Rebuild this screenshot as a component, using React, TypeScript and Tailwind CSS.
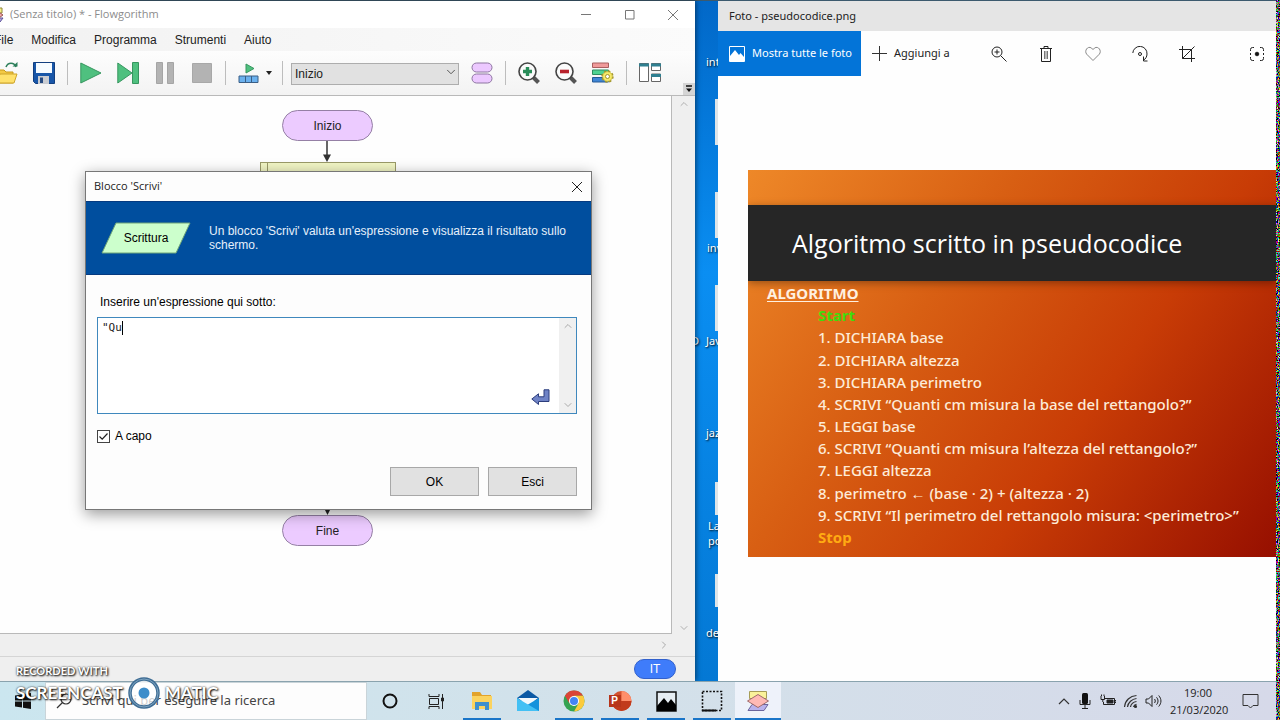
import type { ReactNode } from "react"
import { ChevronDown, ChevronRight, ChevronUp } from "lucide-react"

const menuItems = ["File", "Modifica", "Programma", "Strumenti", "Aiuto"]

const steps = [
  "1. DICHIARA base",
  "2. DICHIARA altezza",
  "3. DICHIARA perimetro",
  "4. SCRIVI “Quanti cm misura la base del rettangolo?”",
  "5. LEGGI base",
  "6. SCRIVI “Quanti cm misura l’altezza del rettangolo?”",
  "7. LEGGI altezza",
  "8. perimetro ← (base · 2) + (altezza · 2)",
  "9. SCRIVI “Il perimetro del rettangolo misura: <perimetro>”",
]

type IconButtonProps = {
  label: string
  className?: string
  children: ReactNode
}
const IconButton = ({ label, className = "", children }: IconButtonProps) => (
  <button type="button" aria-label={label} className={`flex shrink-0 items-center justify-center ${className}`}>
    {children}
  </button>
)

const Separator = () => <div className="mx-3 h-6 w-px shrink-0 bg-[#bdbdbd]" />

const CloseIcon = () => (
  <svg width="12" height="12" viewBox="0 0 12 12" stroke="currentColor" fill="none">
    <path d="M1 1l10 10M11 1L1 11" />
  </svg>
)

const Toolbar = () => (
  <div className="relative flex h-[45px] items-center border-b border-[#b9b9b9] bg-gradient-to-b from-[#fdfdfd] to-[#f3f3f3]">
    <div className="-ml-1 flex items-center gap-[15px]">
      <IconButton label="Apri">
        <svg width="22" height="22" viewBox="0 0 22 22">
          <path d="M0 8h8l2 2h7v11H0z" fill="#f3c944" stroke="#c79a1c" />
          <path d="M4 12h17l-3 9H0z" fill="#ffe16b" stroke="#cfa52a" />
          <path d="M10 5c2-5 8-5 10 0" fill="none" stroke="#2d7f5b" strokeWidth="1.6" />
          <path d="M16.5 4.5h5V0z" fill="#2d7f5b" />
        </svg>
      </IconButton>
      <IconButton label="Salva">
        <svg width="22" height="22" viewBox="0 0 22 22">
          <path d="M.5.5h21v21h-19l-2-2z" fill="#1856a8" stroke="#123f80" />
          <path d="M3 1h16v10H3z" fill="#f6fbff" />
          <path d="M5 14h11v8H5z" fill="#c9ccd2" />
          <path d="M7 15.500h3V21H7z" fill="#274a80" />
        </svg>
      </IconButton>
    </div>
    <Separator />
    <div className="flex items-center gap-[15px]">
      <IconButton label="Esegui">
        <svg width="22" height="22" viewBox="0 0 22 22">
          <path d="M.8 1v20L21 11z" fill="#4fc07f" stroke="#37965f" />
        </svg>
      </IconButton>
      <IconButton label="Passo">
        <svg width="22" height="22" viewBox="0 0 22 22">
          <path d="M.8 1v20L15 11z" fill="#4fc07f" stroke="#37965f" />
          <path d="M15.500.5h6v21h-6z" fill="#4fc07f" stroke="#37965f" />
        </svg>
      </IconButton>
      <IconButton label="Pausa">
        <svg width="22" height="22" viewBox="0 0 22 22" fill="#b3b3b3" stroke="#a5a5a5">
          <path d="M2.500.5h6v21h-6zM13.500.5h6v21h-6z" />
        </svg>
      </IconButton>
      <IconButton label="Ferma">
        <svg width="22" height="22" viewBox="0 0 22 22">
          <path d="M1.500 1.500h19v19h-19z" fill="#b3b3b3" stroke="#a8a8a8" />
        </svg>
      </IconButton>
    </div>
    <Separator />
    <div className="flex items-center gap-[6px]">
      <IconButton label="Finestre di esecuzione">
        <svg width="22" height="22" viewBox="0 0 22 22">
          <path d="M8 2v9l8-4.500z" fill="#4fc07f" stroke="#37965f" />
          <path d="M1 14h19v6.500H1z" fill="#6bb1ee" stroke="#3a5f86" />
          <path d="M7.500 14v6.500M13.500 14v6.500" stroke="#3a5f86" />
        </svg>
      </IconButton>
      <svg width="6" height="4" viewBox="0 0 6 4">
        <path d="M0 0h6L3 4z" fill="#222" />
      </svg>
    </div>
    <div className="mr-2 ml-[10px] h-6 w-px shrink-0 bg-[#bdbdbd]" />
    <label className="relative w-[168px]">
      <select
        aria-label="Funzione"
        className="h-[22px] w-full appearance-none border border-[#adadad] bg-[#e1e1e1] px-[3px] text-xs text-[#222]"
      >
        <option>Inizio</option>
      </select>
      <ChevronDown className="pointer-events-none absolute top-1 right-px size-[14px] text-[#444]" strokeWidth={1.5} />
    </label>
    <IconButton label="Funzioni" className="ml-3">
      <svg width="22" height="22" viewBox="0 0 22 22" fill="#ecc8ff" stroke="#8d76a0">
        <rect x="1" y="1" width="20" height="9" rx="4.500" />
        <rect x="1" y="12" width="20" height="9" rx="4.500" />
      </svg>
    </IconButton>
    <Separator />
    <div className="flex items-center gap-[15px]">
      <IconButton label="Ingrandisci">
        <svg width="22" height="22" viewBox="0 0 22 22">
          <path d="M14 14l6.500 6.500" stroke="#555" strokeWidth="4" />
          <circle cx="9.500" cy="9.500" r="8.500" fill="#fbfbfb" stroke="#444" strokeWidth="1.600" />
          <path d="M9.500 5v9M5 9.500h9" stroke="#2a8d5a" strokeWidth="3.400" />
        </svg>
      </IconButton>
      <IconButton label="Riduci">
        <svg width="22" height="22" viewBox="0 0 22 22">
          <path d="M14 14l6.500 6.500" stroke="#555" strokeWidth="4" />
          <circle cx="9.500" cy="9.500" r="8.500" fill="#fbfbfb" stroke="#444" strokeWidth="1.600" />
          <path d="M5 9.500h9" stroke="#b8222c" strokeWidth="3.600" />
        </svg>
      </IconButton>
      <IconButton label="Stile grafico">
        <svg width="22" height="22" viewBox="0 0 22 22">
          <path d="M.5 1h16v4.500H.5z" fill="#f09a9a" stroke="#a95f5f" />
          <path d="M.5 8h16v4.500H.5z" fill="#4fd392" stroke="#2f8d60" />
          <path d="M.5 15.500h16V20H.5z" fill="#3f86d6" stroke="#265a96" />
          <circle cx="15.500" cy="14.500" r="5" fill="#f7ea6a" stroke="#a2952a" strokeWidth="2.400" strokeDasharray="2.200 1.700" />
          <circle cx="15.500" cy="14.500" r="4.800" fill="#f7ea6a" stroke="#b5a634" strokeWidth=".6" />
          <circle cx="15.500" cy="14.500" r="2" fill="#fff" stroke="#a2952a" />
        </svg>
      </IconButton>
    </div>
    <Separator />
    <IconButton label="Disposizione finestre">
      <svg width="22" height="22" viewBox="0 0 22 22" fill="#fff" stroke="#666">
        <path d="M.5 1.500h9v18h-9zM12.500 1.500h9v7h-9zM12.500 12h9v7.500h-9z" />
        <path d="M0 3h10M12 3h10M12 13.500h10" stroke="#2f7f90" strokeWidth="3" />
      </svg>
    </IconButton>
    <div className="absolute right-0 bottom-0 flex size-3 items-center justify-center bg-[#d5d5d5]">
      <svg width="8" height="8" viewBox="0 0 8 8">
        <path d="M1 1h6" stroke="#111" strokeWidth="1.500" />
        <path d="M1 3.500h6L4 7z" fill="#111" />
      </svg>
    </div>
  </div>
)

const WriteDialog = () => (
  <section className="absolute top-[75px] left-[85px] flex w-[507px] flex-col border border-[#777] bg-[#fdfdfd] shadow-[0_4px_14px_rgba(0,0,0,0.4)]">
    <div className="flex h-[29px] items-center justify-between px-2 font-['Open_Sans',sans-serif] text-[11px] text-[#222]">
      <h2>Blocco 'Scrivi'</h2>
      <IconButton label="Chiudi">
        <CloseIcon />
      </IconButton>
    </div>
    <div className="flex h-[74px] items-center gap-[18px] border-y border-[#053a80] bg-[#004e9e] px-[15px]">
      <div className="relative shrink-0">
        <svg className="block" width="90" height="32" viewBox="0 0 90 32">
          <path d="M15 1h74L75 31H1z" fill="#ccffcc" stroke="#6fa57a" />
        </svg>
        <span className="absolute inset-0 flex items-center justify-center text-xs">Scrittura</span>
      </div>
      <p className="text-xs leading-[14px] text-[#e6f0fb]">
        Un blocco 'Scrivi' valuta un'espressione e visualizza il risultato sullo schermo.
      </p>
    </div>
    <form className="flex flex-col pt-5 pr-[14px] pb-[13px] pl-[11px]">
      <label htmlFor="espressione" className="pl-[3px] text-xs leading-[14px]">
        Inserire un'espressione qui sotto:
      </label>
      <div className="relative mt-2 flex h-[97px] border border-[#3f88bd] bg-white">
        <textarea
          id="espressione"
          className="min-w-0 flex-1 resize-none px-1 py-[3px] font-['DejaVu_Sans_Mono',monospace] text-[11px] leading-[14px] text-[#222] outline-none"
          defaultValue={'"Qu'}
        />
        <div className="flex w-[17px] flex-col items-center justify-between bg-[#f0f0f0] py-[2px] text-[#aaa]">
          <ChevronUp className="size-3" />
          <ChevronDown className="size-3" />
        </div>
        <span className="absolute top-[3px] left-[24px] h-[14px] w-px bg-black" />
        <svg className="absolute right-[26px] bottom-2" width="19" height="16" viewBox="0 0 19 16">
          <path d="M13 .8h5v11.700H7.500v3L.8 10l6.700-5.200v3H13z" fill="#6f83c6" stroke="#2c3d7c" />
        </svg>
      </div>
      <label className="mt-[15px] flex items-center gap-[5px] text-xs leading-[14px]">
        <span className="relative flex size-[13px]">
          <input type="checkbox" defaultChecked className="size-[13px] appearance-none border border-[#444] bg-white" />
          <svg className="pointer-events-none absolute inset-0" width="13" height="13" viewBox="0 0 13 13">
            <path d="M2.500 6.500L5.200 9.200 10.500 3.500" fill="none" stroke="#222" strokeWidth="1.200" />
          </svg>
        </span>
        A capo
      </label>
      <div className="mt-6 flex justify-end gap-[9px] text-xs">
        <button type="button" className="h-[29px] w-[89px] border border-[#a8a8a8] bg-[#e1e1e1]">
          OK
        </button>
        <button type="button" className="h-[29px] w-[89px] border border-[#a8a8a8] bg-[#e1e1e1]">
          Esci
        </button>
      </div>
    </form>
  </section>
)

const Terminal = ({ className, children }: { className: string; children: ReactNode }) => (
  <div
    className={`absolute left-[282px] flex h-[31px] w-[91px] items-center justify-center rounded-full border border-[#9580a5] bg-[#eccbff] text-xs text-[#222] ${className}`}
  >
    {children}
  </div>
)

const FlowgorithmWindow = () => (
  <section className="z-10 flex min-w-0 flex-col bg-[#efefef] shadow-[1px_0_5px_rgba(0,0,0,0.5)]">
    <header className="flex h-[27px] items-center bg-white">
      <svg className="-ml-3" width="16" height="16" viewBox="0 0 16 16">
        <path d="M3 1h11v5H3z" fill="#f6ee86" stroke="#8f873b" />
        <path d="M2 11h13l-3 4H0z" fill="#b0a5e4" stroke="#5d5296" />
        <path d="M8 3l7 5-7 5-7-5z" fill="#f0a6a6" stroke="#955" />
      </svg>
      <h1 className="ml-[6px] flex-1 font-['Open_Sans',sans-serif] text-[11px] text-[#8c8c8c]">
        (Senza titolo) * - Flowgorithm
      </h1>
      <div className="flex gap-8 pr-4 text-[#777]">
        <IconButton label="Riduci a icona">
          <svg width="11" height="11" viewBox="0 0 11 11" stroke="currentColor">
            <path d="M0 5.500h10" />
          </svg>
        </IconButton>
        <IconButton label="Ingrandisci finestra">
          <svg width="11" height="11" viewBox="0 0 11 11" stroke="currentColor" fill="none">
            <path d="M1.500 1.500h8.500v8.500H1.500z" />
          </svg>
        </IconButton>
        <IconButton label="Chiudi finestra">
          <CloseIcon />
        </IconButton>
      </div>
    </header>
    <nav className="flex h-[23px] items-center gap-[18px] bg-gradient-to-r from-[#f2f2f2] to-[#fbfbfb] text-xs text-[#222]">
      {menuItems.map((item) => (
        <button key={item} type="button" className="first:-ml-[6px]">
          {item}
        </button>
      ))}
    </nav>
    <Toolbar />
    <div className="relative flex flex-1">
      <div className="relative min-h-[538px] flex-1 border-r border-b border-[#b9b9b9] bg-[#fefefe]">
        <Terminal className="top-[14px]">Inizio</Terminal>
        <svg className="absolute top-[45px] left-[322px]" width="10" height="21" viewBox="0 0 10 21">
          <path d="M5 0v15" stroke="#333" strokeWidth="1.500" />
          <path d="M1 13.500h8L5 21z" fill="#333" />
        </svg>
        <div className="absolute top-[66px] left-[260px] h-[30px] w-[136px] border border-[#9a9a68] bg-[#f1f5c4] pl-[6px]">
          <div className="h-full border-l border-[#9a9a68]" />
        </div>
        <svg className="absolute top-[412px] left-[323px]" width="9" height="8" viewBox="0 0 9 8">
          <path d="M1 0h7L4.500 7z" fill="#222" />
        </svg>
        <Terminal className="top-[419px]">Fine</Terminal>
      </div>
      <div className="flex w-[23px] flex-col items-center justify-between pt-[2px] text-[#b0b0b0]">
        <ChevronUp className="size-3" />
        <ChevronDown className="size-3" />
      </div>
      <WriteDialog />
    </div>
    <div className="flex h-[23px] items-center justify-end border-b border-[#d5d5d5] pr-[25px] text-[#aaa]">
      <ChevronRight className="size-3" />
    </div>
    <footer className="flex h-6 items-center justify-end pr-[19px]">
      <button type="button" className="h-5 w-[42px] rounded-full border border-[#3160cc] bg-[#3f7cfa] text-xs text-white">
        IT
      </button>
    </footer>
  </section>
)

const iconClass = "absolute right-0 w-[3px] bg-[#dfe5e8]"
const labelClass =
  "absolute font-['Noto_Sans',sans-serif] text-[11px] leading-[15px] whitespace-nowrap text-white [text-shadow:1px_1px_2px_#000]"

const Desktop = () => (
  <div className="relative overflow-hidden bg-gradient-to-b from-[#0268c8] via-[#0a8ef2] via-40% to-[#0478d4]">
    <div className={`${iconClass} top-[98px] h-[46px]`} />
    <div className={`${iconClass} top-[191px] h-[46px]`} />
    <div className={`${iconClass} top-[284px] h-[46px]`} />
    <div className={`${iconClass} top-[481px] h-[33px]`} />
    <div className={`${iconClass} top-[573px] h-[33px]`} />
    <span className={`${labelClass} top-[53px] left-[11px]`}>int</span>
    <span className={`${labelClass} top-[239px] left-[12px]`}>inv</span>
    <span className={`${labelClass} top-[332px] left-[11px]`}>Jav</span>
    <span className={`${labelClass} top-[332px] -left-1`}>D</span>
    <span className={`${labelClass} top-[424px] left-[11px]`}>jaz</span>
    <span className={`${labelClass} top-[517px] left-[13px]`}>
      La
      <br />
      po
    </span>
    <span className={`${labelClass} top-[624px] left-[11px]`}>de</span>
  </div>
)

const Slide = () => (
  <article className="ml-[30px] flex flex-col overflow-hidden bg-[linear-gradient(125deg,#ee8828,#d85f13_34%,#c83c06_64%,#960f00)] pt-[35px] font-['Noto_Sans',sans-serif] text-[#fdebd8]">
    <h2 className="bg-[#262626] pl-11 font-['Open_Sans',sans-serif] text-[25px] leading-[76px] whitespace-nowrap text-white shadow-[0_2px_8px_rgba(0,0,0,0.35)]">
      Algoritmo scritto in pseudocodice
    </h2>
    <div className="flex h-[276px] flex-col justify-between pt-px pb-[9px] pl-[19px] text-[15px] leading-[22px] font-medium whitespace-nowrap">
      <p className="font-bold text-[#fff0e0] underline underline-offset-2">ALGORITMO</p>
      <p className="pl-[51px] font-bold text-[#3fdc0c]">Start</p>
      {steps.map((step) => (
        <p key={step} className="pl-[51px]">
          {step}
        </p>
      ))}
      <p className="pl-[51px] font-bold text-[#ffaa12]">Stop</p>
    </div>
  </article>
)

const MountainIcon = () => (
  <svg width="16" height="16" viewBox="0 0 16 16">
    <path d="M.5.5h15v15H.5z" fill="none" stroke="#fff" />
    <path d="M1 15V10l5-6 4 5 1.500-2L15 11v4z" fill="#fff" />
  </svg>
)

const PhotosWindow = () => (
  <section className="z-10 flex min-w-0 flex-col bg-[#fefefe] font-['Noto_Sans',sans-serif] text-[11px] text-[#222]">
    <header className="flex h-[30px] items-center bg-[#e5e5e5] pl-[11px]">
      <h1>Foto - pseudocodice.png</h1>
    </header>
    <div className="flex h-[45px] items-center">
      <button type="button" className="flex h-full w-[143px] items-center gap-[7px] bg-[#0374d8] pl-[11px] whitespace-nowrap text-white">
        <MountainIcon />
        Mostra tutte le foto
      </button>
      <button type="button" className="flex items-center gap-[7px] pl-[11px] whitespace-nowrap">
        <svg width="15" height="15" viewBox="0 0 15 15" stroke="#333">
          <path d="M7.500 0v15M0 7.500h15" />
        </svg>
        Aggiungi a
      </button>
      <div className="ml-auto flex items-center pr-[11px]">
        <div className="flex gap-[31px] pr-[54px]">
          <IconButton label="Zoom">
            <svg width="16" height="16" viewBox="0 0 16 16" fill="none" stroke="#222">
              <circle cx="6" cy="6" r="5" />
              <path d="M9.800 9.800l5.700 5.700M6 3.500v5M3.500 6h5" />
            </svg>
          </IconButton>
          <IconButton label="Elimina">
            <svg width="16" height="16" viewBox="0 0 16 16" fill="none" stroke="#222">
              <path d="M3.500 2.500v13h9v-13M2 2.500h12M6 2.500V.5h4v2" />
              <path d="M6.500 5v8M8 5v8M9.500 5v8" stroke="#777" />
            </svg>
          </IconButton>
          <IconButton label="Preferiti">
            <svg width="16" height="16" viewBox="0 0 16 16" fill="none" stroke="#888">
              <path d="M8 14.500L1.700 8.200C-1 5 2.500-.5 6.500 2L8 3.600 9.500 2c4-2.500 7.500 3 4.800 6.200z" />
            </svg>
          </IconButton>
          <IconButton label="Ruota">
            <svg width="16" height="16" viewBox="0 0 16 16" fill="none" stroke="#222">
              <path d="M.8 7A7 7 0 0 1 15 8c0 2.800-1.500 5-3.500 6.200M11.500 10.500v4.500H15.500" />
              <circle cx="8" cy="8" r="1.500" />
            </svg>
          </IconButton>
          <IconButton label="Ritaglia">
            <svg width="16" height="16" viewBox="0 0 16 16" fill="none" stroke="#222">
              <path d="M3.500 0v12.500H16M0 3.500h12.500V16M3.500 12.500L15.500.5" />
            </svg>
          </IconButton>
        </div>
        <IconButton label="Modifica e crea">
          <svg width="16" height="16" viewBox="0 0 16 16" fill="none" stroke="#222">
            <path d="M1.500 5V3.500a2 2 0 0 1 2-2H5M11 1.500h1.500a2 2 0 0 1 2 2V5M14.500 11v1.500a2 2 0 0 1-2 2H11M5 14.500H3.500a2 2 0 0 1-2-2V11M1.500 7v2M14.500 7v2" />
            <circle cx="8" cy="8" r="1.800" fill="#111" />
          </svg>
        </IconButton>
      </div>
    </div>
    <div className="flex-1 pt-[94px]">
      <Slide />
    </div>
  </section>
)

type TaskButtonProps = {
  label: string
  open?: boolean
  active?: boolean
  children: ReactNode
}
const TaskButton = ({ label, open, active, children }: TaskButtonProps) => (
  <button
    type="button"
    aria-label={label}
    className={`relative flex w-[46px] shrink-0 items-center justify-center ${active ? "bg-[#eef2fa]" : ""}`}
  >
    {children}
    {open && <span className={`absolute bottom-0 h-[2px] bg-[#1a75c8] ${active ? "inset-x-0" : "inset-x-1"}`} />}
  </button>
)

const Taskbar = () => (
  <footer className="z-20 flex h-[39px] border-t border-[#8aa3ae] bg-gradient-to-r from-[#cbe6ef] via-[#d3e1ea] to-[#d6d9e9] text-[#222]">
    <button type="button" aria-label="Start" className="flex w-[45px] items-center justify-center">
      <svg width="16" height="16" viewBox="0 0 16 16" fill="#111">
        <path d="M0 2.500l7-1v6H0zM8 1.300L16 0v7.500H8zM0 8.500h7v6l-7-1zM8 8.500h8V16l-8-1.300z" />
      </svg>
    </button>
    <label className="flex w-[322px] items-center gap-[10px] border border-[#c9d4d9] bg-[#fdfdfd] pl-[10px]">
      <svg width="16" height="16" viewBox="0 0 16 16" fill="none" stroke="#333" strokeWidth="1.200">
        <circle cx="10" cy="6" r="5" />
        <path d="M6.500 9.500L1 15" />
      </svg>
      <input
        type="search"
        aria-label="Cerca"
        placeholder="Scrivi qui per eseguire la ricerca"
        className="min-w-0 flex-1 bg-transparent font-['Noto_Sans',sans-serif] text-[13px] outline-none placeholder:text-[#444]"
      />
    </label>
    <TaskButton label="Cortana">
      <svg width="16" height="16" viewBox="0 0 16 16">
        <circle cx="8" cy="8" r="6.500" fill="none" stroke="#111" strokeWidth="2" />
      </svg>
    </TaskButton>
    <TaskButton label="Visualizzazione attività">
      <svg width="16" height="16" viewBox="0 0 16 16" fill="none" stroke="#222">
        <path d="M1 1v2.500h10V1M1.500 5.500h9v6h-9zM1 16v-2.500h10V16M14.500 1v15" />
        <path d="M13.500 5h2v3h-2z" fill="#222" />
      </svg>
    </TaskButton>
    <TaskButton label="Esplora file" open>
      <svg width="22" height="20" viewBox="0 0 22 20">
        <path d="M1 1h8l2 3h9v14H1z" fill="#e2a32c" />
        <path d="M1 5h20v13H1z" fill="#fbd35f" />
        <path d="M4 11h14v8h-4v-4H8v4H4z" fill="#3d8fce" />
      </svg>
    </TaskButton>
    <TaskButton label="Posta">
      <svg width="24" height="22" viewBox="0 0 24 22">
        <path d="M1 8L12 0l11 8v3H1z" fill="#0c59a4" />
        <path d="M2 8h20l-10 8z" fill="#f2f8fc" />
        <path d="M23 8v13H1z" fill="#1592dc" />
        <path d="M1 8l22 13H1z" fill="#43c0f4" />
      </svg>
    </TaskButton>
    <TaskButton label="Chrome" open>
      <svg width="22" height="22" viewBox="0 0 22 22">
        <circle cx="11" cy="11" r="10.500" fill="#35a352" />
        <path d="M1.900 5.800A10.500 10.500 0 0 1 20.100 5.800H11l-4.500 7.800z" fill="#db4437" />
        <path d="M20.100 5.800A10.500 10.500 0 0 1 11 21.500l4.500-8L11 5.800z" fill="#fccb3c" />
        <circle cx="11" cy="11" r="5" fill="#fff" />
        <circle cx="11" cy="11" r="4" fill="#4285f4" />
      </svg>
    </TaskButton>
    <TaskButton label="PowerPoint" open>
      <span className="relative">
        <svg className="block" width="23" height="22" viewBox="0 0 23 22">
          <circle cx="12.500" cy="11" r="10" fill="#d35230" />
          <path d="M12.500 1a10 10 0 0 1 10 10h-10z" fill="#ff8f6b" />
          <path d="M22.500 11a10 10 0 0 1-20 0z" fill="#c13b1c" />
          <path d="M0 5h12v12H0z" fill="#b7351a" />
        </svg>
        <span className="absolute top-[5px] left-0 w-3 text-center font-['Liberation_Sans',sans-serif] text-[10px] leading-3 font-bold text-white">
          P
        </span>
      </span>
    </TaskButton>
    <TaskButton label="Foto" open>
      <svg width="21" height="21" viewBox="0 0 21 21">
        <path d="M1 1h19v19H1z" fill="#e6edf2" stroke="#111" strokeWidth="1.500" />
        <path d="M1 20v-5l7-8 4 5 3-4 5 6v6z" fill="#000" />
      </svg>
    </TaskButton>
    <TaskButton label="Cattura" open>
      <svg width="22" height="22" viewBox="0 0 22 22" fill="none" stroke="#111">
        <path d="M1.500 1.500h19v19h-19z" strokeWidth="1.600" strokeDasharray="2 1.500" />
        <path d="M1 20.500h14" strokeWidth="2" />
      </svg>
    </TaskButton>
    <TaskButton label="Flowgorithm" open active>
      <svg width="22" height="22" viewBox="0 0 22 22">
        <path d="M2.500 1.500h17v7h-17z" fill="#faf29a" stroke="#a69d57" />
        <path d="M5 14.500h16l-4 6H1z" fill="#b9b2ec" stroke="#6b659c" />
        <path d="M11 4.500l10.500 6.500L11 17.500.5 11z" fill="#ffb9b4" stroke="#a06a6a" />
      </svg>
    </TaskButton>
    <div className="ml-auto flex items-center pr-[17px] font-['Noto_Sans',sans-serif]">
      <div className="flex items-center gap-[7px]">
        <svg width="12" height="16" viewBox="0 0 12 16" fill="none" stroke="#333">
          <path d="M1 11l5-5 5 5" strokeWidth="1.200" />
        </svg>
        <svg className="mx-[2px]" width="12" height="16" viewBox="0 0 12 16">
          <rect x="3" y="0" width="6" height="11" rx="1.500" fill="#111" />
          <path d="M1 7v4.500h10V7M6 12v3M3 15.500h6" fill="none" stroke="#222" />
        </svg>
        <svg width="16" height="16" viewBox="0 0 16 16" fill="none" stroke="#222">
          <path d="M5 5.500h9.500v6H3.500V9M14.500 7.500h1.500v2h-1.500" />
          <path d="M7 7h6v3H7z" fill="#222" />
          <path d="M1 3v3.500h3.500V3M2.800 6.500V9M1.500 1.500V3M4 1.500V3" />
        </svg>
        <svg width="15" height="16" viewBox="0 0 15 16" fill="none" stroke="#333" strokeWidth="1.200">
          <path d="M1.500 14C2 7.500 7 3 13.500 2.500M4.500 14c.5-4.500 4.500-8 9-8.500M7.500 14c.5-3 3-5 6-5.500M10.500 14c.3-1.500 1.500-2.500 3-2.700" />
          <circle cx="12.500" cy="13.500" r="1" fill="#222" />
        </svg>
        <svg width="17" height="16" viewBox="0 0 17 16" fill="none" stroke="#222">
          <path d="M1 6h2.500L7 2.500v11L3.500 10H1zM9.500 6c1 1.200 1 2.800 0 4M11.500 4.300c2 2.200 2 5.200 0 7.400M13.700 2.500c3 3.500 3 7.500 0 11" />
        </svg>
      </div>
      <time className="mx-2 w-[56px] text-center font-['Open_Sans',sans-serif] text-[11px] leading-[17px] whitespace-nowrap">
        19:00
        <br />
        21/03/2020
      </time>
      <button type="button" aria-label="Centro notifiche" className="ml-2">
        <svg className="block" width="17" height="16" viewBox="0 0 17 16" fill="none" stroke="#333">
          <path d="M1 1.500h15v11h-5L8.500 15 6 12.500H1z" />
        </svg>
      </button>
    </div>
  </footer>
)

const Watermark = () => (
  <div className="pointer-events-none absolute bottom-[10px] left-4 z-30 font-['Lato',sans-serif] font-bold text-white [text-shadow:1px_1px_2px_#000,0_0_2px_#333]">
    <div className="-mb-px text-[11px] leading-3">RECORDED WITH</div>
    <div className="flex items-center gap-[5px] text-[17px] leading-8">
      SCREENCAST
      <svg width="32" height="34" viewBox="0 0 32 34">
        <circle cx="16" cy="17" r="14" fill="#fff" fillOpacity=".75" stroke="#3f6d94" strokeWidth="3.500" />
        <circle cx="16" cy="17" r="14" fill="none" stroke="#7da3c0" />
        <circle cx="16" cy="17" r="5.500" fill="#3d8dca" />
      </svg>
      MATIC
    </div>
  </div>
)

// strip of static along the right side of the screen
const StaticNoise = () => (
  <svg className="w-1 shrink-0 self-stretch" aria-hidden="true">
    <filter id="static" x="0" y="0" width="100%" height="100%">
      <feTurbulence type="fractalNoise" baseFrequency="0.8" numOctaves="2" />
      <feColorMatrix values="4 0 0 0 -1.900  0 4 0 0 -1.900  0 0 4 0 -1.900  0 0 0 0 1" />
    </filter>
    <rect width="100%" height="100%" filter="url(#static)" />
  </svg>
)

const App = () => {
  return (
    <div className="relative flex min-h-screen overflow-hidden bg-white font-['Liberation_Sans',Arial,sans-serif] text-black">
      <div className="flex min-w-0 flex-1 flex-col">
        <main className="grid flex-1 grid-cols-[695fr_23px_558fr] border-t border-[#3c5a6e]">
          <FlowgorithmWindow />
          <Desktop />
          <PhotosWindow />
        </main>
        <Taskbar />
      </div>
      <StaticNoise />
      <Watermark />
    </div>
  )
}

export default App
